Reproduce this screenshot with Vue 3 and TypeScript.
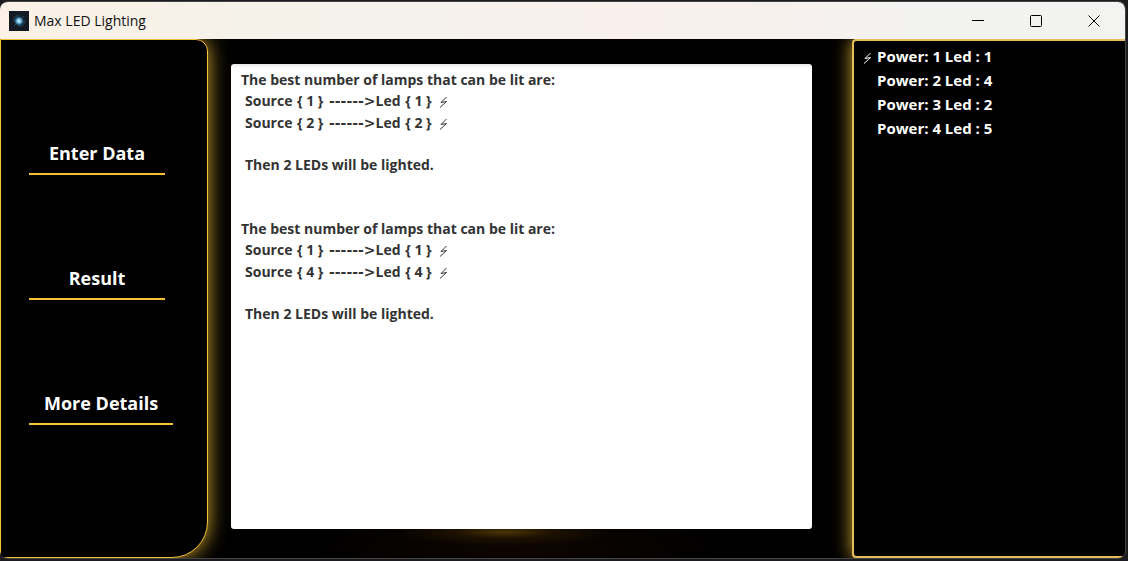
<script setup lang="ts">
interface Pair { source: number; led: number }
interface Lamp { power: number; led: number; lit: boolean }

const menu: string[] = ['Enter Data', 'Result', 'More Details']

const results: Pair[][] = [
  [{ source: 1, led: 1 }, { source: 2, led: 2 }],
  [{ source: 1, led: 1 }, { source: 4, led: 4 }],
]

const lamps: Lamp[] = [
  { power: 1, led: 1, lit: true },
  { power: 2, led: 4, lit: false },
  { power: 3, led: 2, lit: false },
  { power: 4, led: 5, lit: false },
]
</script>

<template>
  <div class="desktop">
    <div class="window">
      <header class="titlebar">
        <svg class="logo" viewBox="0 0 20 20" aria-hidden="true">
          <defs>
            <radialGradient id="spark">
              <stop offset="0" stop-color="#e6faff" />
              <stop offset="0.4" stop-color="#6cbce4" />
              <stop offset="0.7" stop-color="#2b6592" stop-opacity="0.7" />
              <stop offset="1" stop-color="#141c28" stop-opacity="0" />
            </radialGradient>
          </defs>
          <rect width="20" height="20" fill="#141a22" />
          <path d="M10 4v12M4 10h13M5 5l10 10M15 5L5 15M7.500 4l5 12M4 7.500l12 5" stroke="#2b5f8a" stroke-width="0.700" />
          <circle cx="10" cy="10" r="5.500" fill="url(#spark)" />
        </svg>
        <h1 class="title">Max LED Lighting</h1>
        <div class="controls">
          <button type="button" class="control" aria-label="Minimize">
            <svg viewBox="0 0 14 14"><path d="M1 6.500h12" /></svg>
          </button>
          <button type="button" class="control" aria-label="Maximize">
            <svg viewBox="0 0 14 14"><rect x="1.500" y="1.500" width="11" height="11" rx="1" /></svg>
          </button>
          <button type="button" class="control" aria-label="Close">
            <svg viewBox="0 0 14 14"><path d="M1.500 1.500l11 11M12.500 1.500l-11 11" /></svg>
          </button>
        </div>
      </header>

      <div class="body">
        <nav class="menu">
          <button v-for="item in menu" :key="item" type="button" class="menu-item">{{ item }}</button>
        </nav>

        <main class="stage">
          <div class="report">
            <section v-for="(pairs, i) in results" :key="i" class="result">
              <p>The best number of lamps that can be lit are:</p>
              <p v-for="pair in pairs" :key="pair.source" class="detail">
                Source <span class="slot">{ {{ pair.source }} }</span> <span class="arrow">------&gt;</span>Led <span class="slot">{ {{ pair.led }} }</span>
                <svg class="bolt" viewBox="0 0 9 12" role="img" aria-label="lit"><path d="M7.500 1L2 6.500L7.500 5.500L1 11.500" /></svg>
              </p>
              <p class="detail summary">Then {{ pairs.length }} LEDs will be lighted.</p>
            </section>
          </div>
        </main>

        <aside class="lamps">
          <ul>
            <li v-for="lamp in lamps" :key="lamp.power">
              <span class="mark">
                <svg v-if="lamp.lit" class="bolt" viewBox="0 0 9 12" role="img" aria-label="lit"><path d="M7.500 1L2 6.500L7.500 5.500L1 11.500" /></svg>
              </span>
              Power: {{ lamp.power }} Led : {{ lamp.led }}
            </li>
          </ul>
        </aside>
      </div>
    </div>
  </div>
</template>

<style>
body {
  margin: 0;
  background: #1b1a1d;
}
</style>

<style scoped>
.desktop {
  box-sizing: border-box;
  display: flex;
  min-height: 100vh;
  padding: 1px 2px 2px 0;
  background: #1b1a1d;
  font-family: "Open Sans", "Noto Sans", sans-serif;
}

.window {
  display: flex;
  flex: 1;
  flex-direction: column;
  overflow: hidden;
  border: 1px solid #444345;
  border-left: 0;
  border-radius: 8px;
  background: #000;
}

.titlebar {
  position: relative;
  z-index: 2;
  display: flex;
  align-items: center;
  height: 37px;
  padding-left: 9px;
  background: linear-gradient(90deg, #fbf1e6 0%, #f5f2ea 22%, #f5f2ec 35%, #f9f0ec 55%, #f6f1ee 72%, #f2f3f1 84%, #f3f3f1 100%);
}

.logo {
  width: 20px;
  height: 20px;
}

.title {
  margin: 0 0 0 5px;
  color: #111;
  font-size: 14px;
  font-weight: 400;
}

.controls {
  display: flex;
  height: 100%;
  margin-left: auto;
  padding-right: 2px;
}

.control {
  display: grid;
  place-items: center;
  width: 58px;
  padding: 0;
  border: 0;
  background: none;
}

.control svg {
  width: 14px;
  height: 14px;
  fill: none;
  stroke: #000;
}

.body {
  display: grid;
  flex: 1;
  grid-template-columns: 208px 1fr 273px;
}

.menu {
  display: flex;
  z-index: 1;
  flex-direction: column;
  align-items: flex-start;
  gap: 85px;
  padding: 95px 27px 0 28px;
  border: 1px solid #f5c033;
  border-radius: 0 12px 36px 0;
  background: #000;
  box-shadow: 0 0 20px #d6a82d;
}

.menu-item {
  min-width: 136px;
  height: 40px;
  padding: 0 15px 2px;
  border: 0;
  border-bottom: 2px solid #f5c033;
  background: none;
  color: #fff;
  font-family: inherit;
  font-size: 18px;
  font-weight: 700;
  white-space: nowrap;
}

.stage {
  display: flex;
  padding: 25px 40px 29px 23px;
  background: radial-gradient(ellipse 110px 14px at 46% 95%, #4b3505 0%, #1c1102 45%, transparent 100%), radial-gradient(ellipse 220px 40px at 48% 98%, #0e0501, #000);
}

.report {
  flex: 1;
  padding: 5px 10px;
  border-radius: 3px;
  background: linear-gradient(#e8e8e8, #fff 4px);
  color: #333;
  font-size: 14px;
  font-weight: 700;
  line-height: 21px;
}

.report p {
  margin: 0;
}

.result + .result {
  margin-top: 43px;
}

.report .detail {
  padding-left: 4px;
}

.report .summary {
  margin-top: 20px;
}

.slot {
  margin: 0 2px 0 1px;
}

.arrow {
  font-family: "DejaVu Sans", sans-serif;
}

.bolt {
  width: 9px;
  height: 12px;
  margin-left: 5px;
  fill: none;
  stroke: currentColor;
  vertical-align: -2px;
}

.lamps {
  z-index: 1;
  border: 2px solid #e3bd5a;
  border-right: 0;
  border-radius: 4px 0 0 4px;
  background: #000;
  box-shadow: 0 0 18px #d6a82d;
  color: #fff;
  font-size: 15px;
  font-weight: 700;
  line-height: 24px;
}

.lamps ul {
  margin: 0;
  padding: 3px 8px;
  list-style: none;
}

.lamps li {
  display: flex;
}

.mark {
  width: 15px;
}

.mark .bolt {
  margin-left: 1px;
}
</style>
